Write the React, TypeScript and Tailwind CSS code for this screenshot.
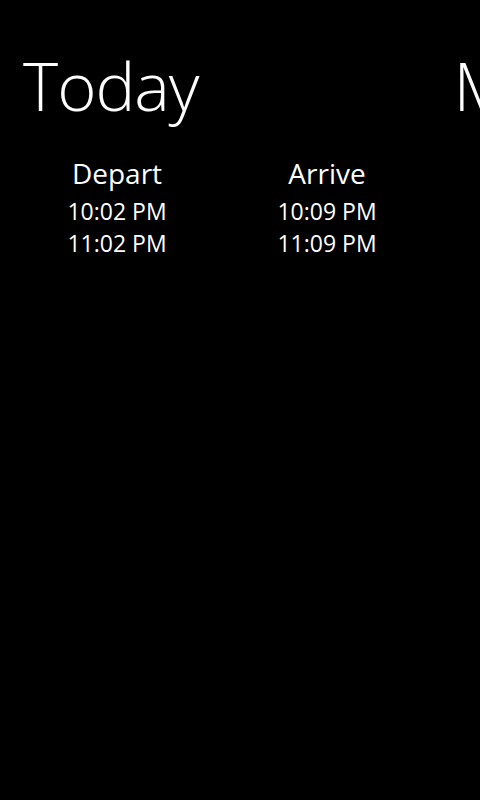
export default function App() {
  const font = { fontFamily: '"Open Sans", "Noto Sans", sans-serif' };
  return (
    <div className="w-[480px] h-[800px] bg-black text-white overflow-hidden" style={font}>
      <div className="flex gap-[255px] pl-[23px] pt-[37px] whitespace-nowrap">
        <div className="text-[67px] font-light leading-[96px] tracking-[-1px]">Today</div>
        <div className="text-[67px] font-light leading-[96px]">Monday</div>
      </div>
      <div className="grid grid-cols-[210px_210px] pl-[12px] pt-[20px]">
        <div className="flex flex-col items-center">
          <div className="text-[28px] leading-[40px]">Depart</div>
          <div className="text-[23px] leading-[32px] mt-[2px]">10:02 PM</div>
          <div className="text-[23px] leading-[32px]">11:02 PM</div>
        </div>
        <div className="flex flex-col items-center">
          <div className="text-[28px] leading-[40px]">Arrive</div>
          <div className="text-[23px] leading-[32px] mt-[2px]">10:09 PM</div>
          <div className="text-[23px] leading-[32px]">11:09 PM</div>
        </div>
      </div>
    </div>
  );
}
